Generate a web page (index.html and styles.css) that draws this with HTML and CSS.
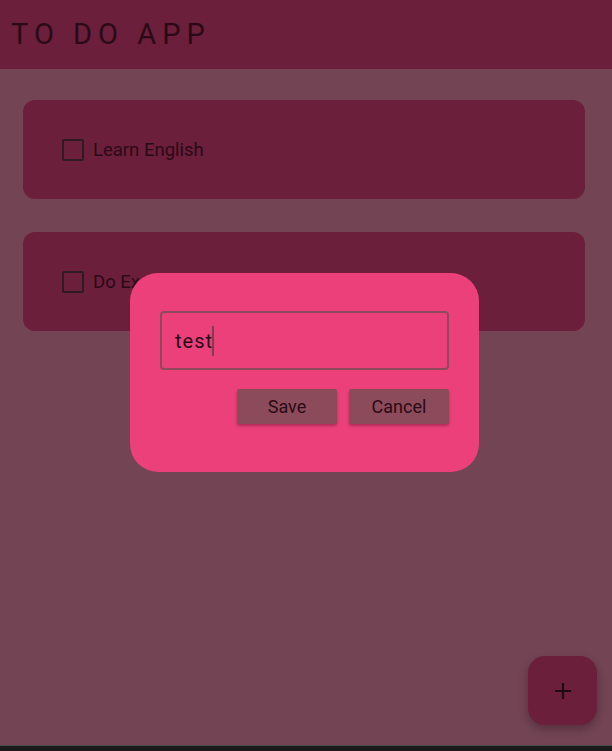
FILE: index.html
```html
<!DOCTYPE html>
<html>
<head>
<meta charset="utf-8">
<link rel="stylesheet" href="styles.css">
</head>
<body>
<div class="screen">
  <header class="appbar"><h1 class="title">TO DO APP</h1></header>
  <main class="body">
    <div class="card"><span class="check"></span><span class="label">Learn English</span></div>
    <div class="card"><span class="check"></span><span class="label">Do Exercise</span></div>
    <button class="fab" aria-label="add">
      <svg width="20" height="20" viewBox="0 0 20 20"><path d="M10 2v16M2 10h16" stroke="#1e0a10" stroke-width="2.2" fill="none"/></svg>
    </button>
  </main>
  <div class="navbar"></div>
  <div class="dialog">
    <div class="field"><span class="value">test</span><span class="cursor"></span></div>
    <div class="actions">
      <button class="btn">Save</button>
      <button class="btn">Cancel</button>
    </div>
  </div>
</div>
</body>
</html>
```
FILE: styles.css
```css
* { box-sizing: border-box; }
html, body { margin: 0; padding: 0; }
body { font-family: Roboto, "Noto Sans", sans-serif; background: #724454; }
.screen { position: relative; width: 612px; height: 751px; display: flex; flex-direction: column; overflow: hidden; }
.appbar { height: 69px; background: #6b1f3a; display: flex; align-items: center; padding-left: 11px; padding-bottom: 2px; flex: none; }
.title { margin: 0; font-weight: 400; font-size: 29px; letter-spacing: 6px; color: #2a0a16; }
.body { flex: 1; position: relative; background: #724454; padding: 31px 27px 0 23px; display: flex; flex-direction: column; gap: 33px; }
.card { height: 99px; background: #6b1f3a; border-radius: 12px; display: flex; align-items: center; padding-left: 39px; }
.check { width: 22px; height: 22px; border: 2.5px solid #2c1c22; border-radius: 2px; flex: none; }
.label { margin-left: 9px; font-size: 18.5px; color: #2a0a16; }
.fab { position: absolute; right: 15px; bottom: 20px; width: 69px; height: 69px; border-radius: 17px; border: none; background: #6b1f3a; box-shadow: 0 4px 8px rgba(40,10,20,0.35); display: flex; align-items: center; justify-content: center; padding: 0; }
.navbar { height: 6px; background: #1a1a1a; border-top: 1px solid #4a4a4a; flex: none; }
.dialog { position: absolute; left: 130px; top: 273px; width: 349px; height: 199px; background: #ec407a; border-radius: 28px; padding: 38px 30px 0 30px; }
.field { height: 59px; border: 2px solid #8c4a5c; border-radius: 4px; display: flex; align-items: center; padding-left: 13px; }
.value { font-size: 20px; letter-spacing: 1px; color: #2a0a16; }
.cursor { width: 2px; height: 30px; background: #7a4050; margin-left: -1px; }
.actions { display: flex; justify-content: flex-end; gap: 12px; margin-top: 19px; }
.btn { width: 100px; height: 35px; border: none; border-radius: 2px; background: #8c4b5a; color: #2a0a16; font-family: Roboto, sans-serif; font-size: 18px; box-shadow: 0 2px 3px rgba(60,10,30,0.35); padding: 0; }
```
